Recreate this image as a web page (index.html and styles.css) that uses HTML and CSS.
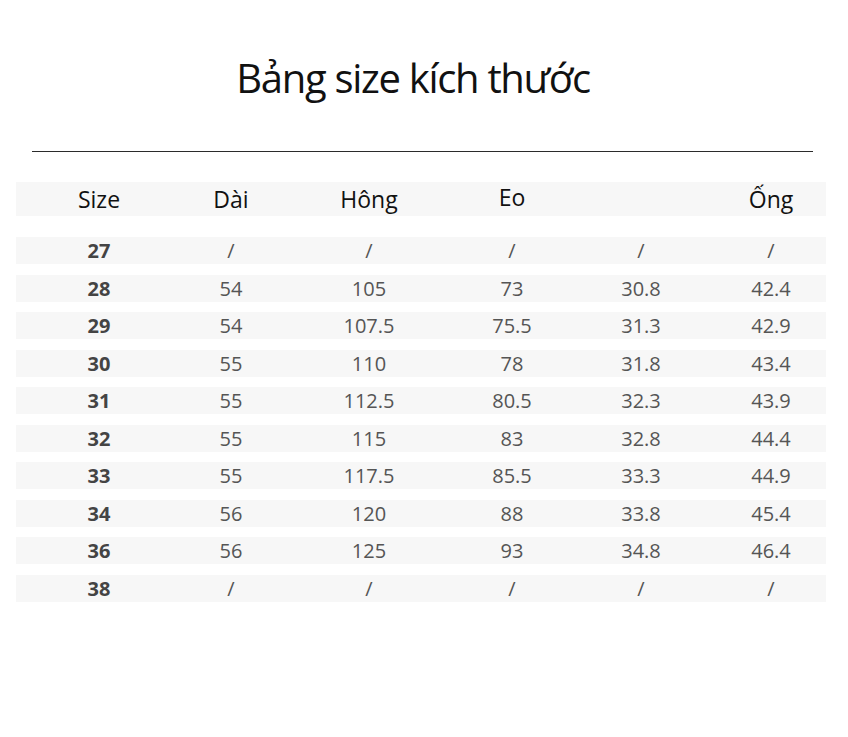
FILE: index.html
```html
<!DOCTYPE html>
<html lang="vi">
<head>
<meta charset="utf-8">
<title>Bảng size kích thước</title>
<link rel="stylesheet" href="styles.css">
</head>
<body>
<div class="page">
  <h1 class="title">Bảng size kích thước</h1>
  <div class="rule"></div>
  <div class="table">
    <div class="row head">
      <div>Size</div><div>Dài</div><div>Hông</div><div class="eo">Eo</div><div></div><div>Ống</div>
    </div>
    <div class="rows">
      <div class="row"><div class="sz">27</div><div>/</div><div>/</div><div>/</div><div>/</div><div>/</div></div>
      <div class="row"><div class="sz">28</div><div>54</div><div>105</div><div>73</div><div>30.8</div><div>42.4</div></div>
      <div class="row"><div class="sz">29</div><div>54</div><div>107.5</div><div>75.5</div><div>31.3</div><div>42.9</div></div>
      <div class="row"><div class="sz">30</div><div>55</div><div>110</div><div>78</div><div>31.8</div><div>43.4</div></div>
      <div class="row"><div class="sz">31</div><div>55</div><div>112.5</div><div>80.5</div><div>32.3</div><div>43.9</div></div>
      <div class="row"><div class="sz">32</div><div>55</div><div>115</div><div>83</div><div>32.8</div><div>44.4</div></div>
      <div class="row"><div class="sz">33</div><div>55</div><div>117.5</div><div>85.5</div><div>33.3</div><div>44.9</div></div>
      <div class="row"><div class="sz">34</div><div>56</div><div>120</div><div>88</div><div>33.8</div><div>45.4</div></div>
      <div class="row"><div class="sz">36</div><div>56</div><div>125</div><div>93</div><div>34.8</div><div>46.4</div></div>
      <div class="row"><div class="sz">38</div><div>/</div><div>/</div><div>/</div><div>/</div><div>/</div></div>
    </div>
  </div>
</div>
</body>
</html>
```

FILE: styles.css
```css
* { box-sizing: border-box; }
html, body { margin: 0; padding: 0; background: #ffffff; }
body { width: 848px; height: 737px; overflow: hidden; font-family: "Open Sans", "Noto Sans", sans-serif; }
.page { display: flex; flex-direction: column; }
.title {
  margin: 52px 0 0 0;
  font-size: 40px;
  line-height: 52px;
  font-weight: 400;
  letter-spacing: -1.3px;
  color: #111111;
  text-align: center;
  padding-right: 22px;
}
.rule {
  margin: 47px 0 0 32px;
  width: 781px;
  height: 1px;
  background: #2b2b2b;
}
.table { margin: 30px 0 0 16px; width: 810px; }
.row {
  display: grid;
  grid-template-columns: 166px 98px 178px 108px 150px 110px;
  align-items: center;
  background: #f7f7f7;
  height: 27px;
  font-size: 20px;
  color: #555555;
}
.row > div { text-align: center; line-height: 27px; }
.row.head { height: 34px; font-size: 23px; color: #111111; }
.row.head > div { line-height: 34px; }
.row.head .eo { position: relative; top: -2px; }
.rows { display: flex; flex-direction: column; gap: 10.5px; margin-top: 21px; }
.row .sz { font-weight: 700; color: #444444; }
```
